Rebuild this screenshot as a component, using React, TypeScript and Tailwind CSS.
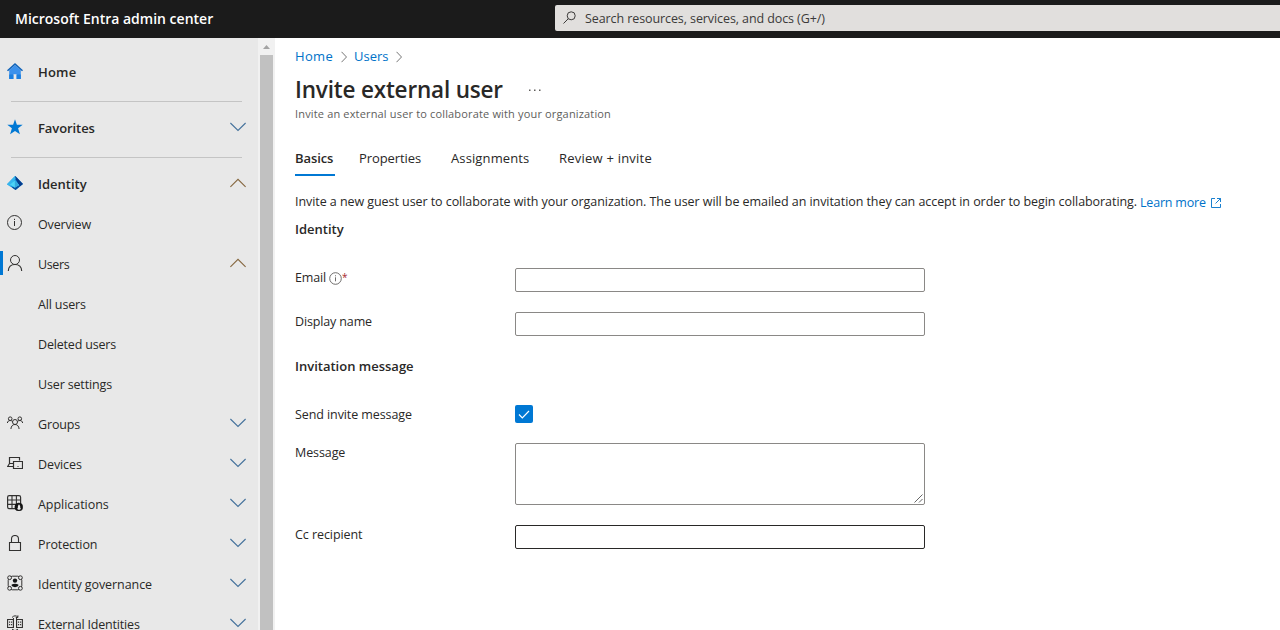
import type { ReactNode } from "react";

const Chevron = ({ up = false }: { up?: boolean }) => (
  <svg width="16" height="10" viewBox="0 0 16 10" fill="none" className="mb-0.5 shrink-0">
    <path d={up ? "M.4 8.8 8 1.3l7.6 7.5" : "M.4 1 8 8.5 15.6 1"} stroke={up ? "#86673f" : "#45729c"} strokeWidth="1.1" />
  </svg>
);

const Icon = ({ children }: { children: ReactNode }) => (
  <svg width="16" height="16" viewBox="0 0 16 16" fill="none" stroke="#323130" strokeWidth="1" className="mb-0.5 shrink-0">
    {children}
  </svg>
);

const HomeIcon = () => (
  <Icon>
    <g stroke="none">
      <path d="M2.2 7.2 8 2l5.8 5.2V16H9.6v-4.8H6.4V16H2.2z" fill="#3b91ec" />
      <path d="M2.2 11.5h4.2V16H2.2zM9.6 11.5h4.2V16H9.6z" fill="#1b7fe0" />
      <path d="M8 0 0 7.2l1 1.1 7-6.2 7 6.2 1-1.1z" fill="#0f62b8" />
    </g>
  </Icon>
);
const StarIcon = () => (
  <Icon><path stroke="none" fill="#0078d4" d="m8 .2 1.9 5.5 5.8.1-4.6 3.5 1.8 6L8 11.9 3.1 15.3l1.8-6L.3 5.8l5.8-.1z" /></Icon>
);
const IdentityIcon = () => (
  <Icon>
    <g stroke="none">
      <path d="M8.3 1 16 9.1l-7.4 6L0 9.2z" fill="#1490df" />
      <path d="M8.3 1 16 9.1l-3.2 2.4L8 3.3z" fill="#063c8c" />
      <path d="M12.8 11.5 8.6 15 5 12.5l3.5-4z" fill="#084e9d" />
      <path d="M7.8 1 0 9.2l3.2 2.3 5.4-8z" fill="#36b6ee" />
      <path d="m7.8 5.3 4.3 4.7-4.3 2.8L3 9.8z" fill="#4bd4f7" />
      <path d="m7.8 5.3 4.3 4.7-4.3 2.8z" fill="#35a9df" />
    </g>
  </Icon>
);
const OverviewIcon = () => (
  <Icon><circle cx="7.5" cy="7.5" r="7" /><path d="M7.5 6v5M7.5 3.8V5" /></Icon>
);
const UserIcon = () => (
  <Icon><circle cx="8" cy="5" r="4.5" /><path d="M1.3 16c.2-4 2.8-6.5 6.7-6.5s6.5 2.5 6.7 6.5" strokeWidth="1.1" /></Icon>
);
const GroupsIcon = () => (
  <Icon>
    <circle cx="8" cy="7" r="2.5" />
    <path d="M3.9 14c.2-2.9 1.8-4.5 4.1-4.5s3.9 1.6 4.1 4.5" />
    <circle cx="3.2" cy="3.7" r="1.8" /><circle cx="12.8" cy="3.7" r="1.8" />
    <path d="M.4 8c.1-1.6 1.2-2.5 2.8-2.5 1 0 1.7.4 2.2 1M15.6 8c-.1-1.6-1.2-2.5-2.8-2.5-1 0-1.7.4-2.2 1" />
  </Icon>
);
const DevicesIcon = () => (
  <Icon>
    <path d="M2.5 8.5v-6h10v3M2.5 8.5.7 11.5h5.8M2.5 8.5h4" strokeWidth="1.2" />
    <path d="M6.5 6.5h9v7h-9zM10.5 11.5h1" strokeWidth="1.2" />
  </Icon>
);
const AppsIcon = () => (
  <Icon>
    <rect x=".6" y=".6" width="13" height="13" rx="1.6" strokeWidth="1.2" />
    <path d="M5 .6v13M9.4.6v13M.6 5h13M.6 9.4h13" strokeWidth="1.1" />
    <circle cx="11.8" cy="12" r="4" fill="#151515" stroke="#151515" strokeWidth=".5" />
    <path d="M12 9.2 13.2 11v1.5l.7 1.5-1.9.9-1.8-.9.7-1.5V11z" fill="#eee" stroke="none" />
  </Icon>
);
const LockIcon = () => (
  <Icon><path d="M2.5 7.5h11v8h-11zM4.5 7.5V4a3.5 3.5 0 0 1 7 0v3.5" strokeWidth="1.1" /></Icon>
);
const GovernanceIcon = () => (
  <Icon>
    <rect x="1.2" y="1.2" width="13.6" height="13.6" rx="4" />
    <circle cx="2.6" cy="2.7" r="1.9" fill="#e8e8e8" /><circle cx="13.4" cy="2.7" r="1.9" fill="#e8e8e8" />
    <circle cx="2.6" cy="13.3" r="1.9" fill="#e8e8e8" /><circle cx="13.4" cy="13.3" r="1.9" fill="#e8e8e8" />
    <circle cx="8" cy="5.6" r="2.2" fill="#151515" stroke="none" />
    <path d="M4.7 9.5Q8 8 11.3 9.5v1.6Q8 13.4 4.7 11.1z" fill="#151515" stroke="none" />
  </Icon>
);
const ExternalIcon = () => (
  <Icon>
    <path d="M.6 4.5h5.8v8H.6zM9.6 4.5h5.8v8H9.6z" strokeWidth="1.1" />
    <path d="M2.6 6.5v4M4.6 6.5v4M11.6 6.5v4M13.6 6.5v4" strokeDasharray="1.3 1.1" strokeWidth="1.1" />
    <path d="M5 2.5Q8-.8 11 2.3M10.9.4v2.1H8.8M5 14.2q3 3 6 0M6.5 3v10M9.5 3v10" />
  </Icon>
);

type NavRow = { label: string; cls: string; icon?: ReactNode; chev?: "up" | "down"; active?: boolean };

const nav: NavRow[] = [
  { label: "Identity", cls: "font-semibold text-[13px]", icon: <IdentityIcon />, chev: "up" },
  { label: "Overview", cls: "pt-0.5 tracking-[-0.15px]", icon: <OverviewIcon /> },
  { label: "Users", cls: "pt-0.5 tracking-[-0.35px]", icon: <UserIcon />, chev: "up", active: true },
  { label: "All users", cls: "pt-0.5 tracking-[-0.15px]" },
  { label: "Deleted users", cls: "pt-0.5 tracking-[-0.18px]" },
  { label: "User settings", cls: "pt-0.5 tracking-[-0.15px]" },
  { label: "Groups", cls: "pt-0.5 tracking-[-0.15px]", icon: <GroupsIcon />, chev: "down" },
  { label: "Devices", cls: "pt-0.5 tracking-[-0.1px]", icon: <DevicesIcon />, chev: "down" },
  { label: "Applications", cls: "pt-0.5 tracking-[-0.04px]", icon: <AppsIcon />, chev: "down" },
  { label: "Protection", cls: "pt-0.5 tracking-[-0.1px]", icon: <LockIcon />, chev: "down" },
  { label: "Identity governance", cls: "pt-0.5 tracking-[-0.07px]", icon: <GovernanceIcon />, chev: "down" },
  { label: "External Identities", cls: "pt-0.5 tracking-[-0.18px]", icon: <ExternalIcon />, chev: "down" },
];

const Row = ({ label, cls, icon, chev, active }: NavRow) => (
  <div className="flex h-10 shrink-0 items-center pr-3">
    <div className={active ? "mb-0.5 h-6 w-[3px] bg-[#0078d4]" : "w-[3px]"} />
    <div className="ml-1 w-[31px]">{icon}</div>
    <span className={`flex-1 ${cls}`}>{label}</span>
    {chev && <Chevron up={chev === "up"} />}
  </div>
);

const Divider = () => (
  <div className="h-4 shrink-0 pt-[9px] pr-4 pl-[11px]"><div className="h-px bg-[#c4c4c4]" /></div>
);

const Crumb = () => (
  <svg width="6" height="12" viewBox="0 0 6 12" fill="none" stroke="#767676" className="mt-0.5"><path d="m.5.8 5 5.2-5 5.2" /></svg>
);

const field = "block w-[410px] rounded-[2px] border bg-white outline-none";

export default function App() {
  return (
    <div className="flex h-[630px] w-[1280px] flex-col overflow-hidden bg-white font-['Open_Sans','Noto_Sans',sans-serif] text-[12.5px] leading-[18px] text-[#292827]">
      <header className="flex h-[38px] shrink-0 bg-[#1b1b1b] pl-[15px]">
        <div className="w-[540px] pt-[9px] text-[14px] leading-5 font-semibold text-white">Microsoft Entra admin center</div>
        <div className="mt-[5px] flex h-[26px] flex-1 items-center rounded-l-[2px] bg-[#e1dfdd] pl-2 text-[#3b3a39]">
          <svg width="13" height="13" viewBox="0 0 13 13" fill="none" stroke="#3b3a39" className="mb-px"><circle cx="8.2" cy="4.8" r="4" /><path d="M5.3 7.7.5 12.5" /></svg>
          <span className="ml-[9px] pt-0.5 tracking-[-0.09px]">Search resources, services, and docs (G+/)</span>
        </div>
      </header>
      <div className="flex min-h-0 flex-1">
        <nav className="flex w-[258px] shrink-0 flex-col overflow-hidden bg-[#e8e8e8] pt-[14px]">
          <Row label="Home" cls="font-semibold text-[13px] tracking-[0.2px]" icon={<HomeIcon />} />
          <Divider />
          <Row label="Favorites" cls="font-semibold text-[13px] tracking-[-0.08px]" icon={<StarIcon />} chev="down" />
          <Divider />
          {nav.map((n) => <Row key={n.label} {...n} />)}
        </nav>
        <div className="flex w-[17px] shrink-0 flex-col items-center bg-[#f1f1f1]">
          <div className="flex h-[17px] items-center"><svg width="7" height="4" viewBox="0 0 7 4"><path d="M0 4 3.5 0 7 4z" fill="#a3a3a3" /></svg></div>
          <div className="w-[13px] flex-1 bg-[#c1c1c1]" />
        </div>
        <main className="flex min-w-0 flex-1 flex-col pl-5">
          <div className="mt-[9px] flex items-center text-[13px] text-[#0072c9]">
            <span className="w-[46px] tracking-[0.35px]">Home</span><Crumb />
            <span className="ml-[7px] w-[42px]">Users</span><Crumb />
          </div>
          <div className="mt-[9px] flex h-8 items-center">
            <h1 className="w-[234px] text-[22.5px] leading-8 font-semibold tracking-[-0.18px]">Invite external user</h1>
            <svg width="12" height="2" viewBox="0 0 12 2" fill="#605e5c"><path d="M0 .5h1.5V2H0zM5 .5h1.5V2H5zM10 .5h1.5V2H10z" /></svg>
          </div>
          <p className="h-4 text-[11px] leading-4 tracking-[0.16px] text-[#605e5c]">Invite an external user to collaborate with your organization</p>
          <div className="mt-[27px] flex h-[27px] text-[13px]">
            <div className="mr-6 w-10 border-b-2 border-[#0078d4] font-semibold tracking-[-0.1px]">Basics</div>
            <div className="w-[92px] tracking-[-0.08px]">Properties</div>
            <div className="w-[108px] tracking-[0.12px]">Assignments</div>
            <div className="tracking-[0.22px]">Review + invite</div>
          </div>
          <div className="mt-[17px] flex h-[18px] whitespace-nowrap">
            <span className="w-[845px] tracking-[-0.063px]">Invite a new guest user to collaborate with your organization. The user will be emailed an invitation they can accept in order to begin collaborating.</span>
            <a className="flex items-center pt-0.5 text-[#0072c9]"><span className="w-[71px] tracking-[-0.2px]">Learn more</span>
              <svg width="10" height="10" viewBox="0 0 10 10" fill="none" stroke="currentColor" strokeWidth=".9"><path d="M4 .5H.5v9h9V6M6 .5h3.5V4M9.5.5 4.5 5.5" /></svg>
            </a>
          </div>
          <h2 className="mt-[9px] text-[13px] font-semibold">Identity</h2>
          <div className="mt-[30px] flex h-6">
            <div className="mt-px flex h-[18px] w-[220px] items-center"><span className="w-[34px] tracking-[-0.15px]">Email</span>
              <svg width="13" height="13" viewBox="0 0 13 13" fill="none" stroke="#605e5c" strokeWidth=".9"><circle cx="6.5" cy="6.5" r="5.8" /><path d="M6.5 5.3v4M6.5 3.3v1" /></svg>
              <span className="pb-0.5 text-[10px] text-[#a4262c]">*</span>
            </div>
            <input className={`${field} h-6 border-[#8a8886]`} />
          </div>
          <div className="mt-5 flex h-6">
            <label className="w-[220px] pt-px tracking-[-0.14px]">Display name</label>
            <input className={`${field} h-6 border-[#8a8886]`} />
          </div>
          <h2 className="mt-[21px] text-[13px] font-semibold">Invitation message</h2>
          <div className="mt-[30px] flex h-[18px]">
            <label className="w-[220px] pt-px tracking-[-0.09px]">Send invite message</label>
            <span className="flex size-[18px] items-center justify-center rounded-[2px] bg-[#0078d4]">
              <svg width="12" height="9" viewBox="0 0 12 9" fill="none" stroke="white" strokeWidth="1.2"><path d="m1 4.5 3.3 3.3L11 1" /></svg>
            </span>
          </div>
          <div className="mt-5 flex h-[62px]">
            <label className="w-[220px] pt-px tracking-[-0.09px]">Message</label>
            <div className={`${field} flex items-end justify-end border-[#8a8886]`}>
              <svg width="10" height="10" viewBox="0 0 10 10" stroke="#555" strokeWidth=".9"><path d="M.5 8.5l8-8M5 8.5 8.5 5" /></svg>
            </div>
          </div>
          <div className="mt-5 flex h-6">
            <label className="w-[220px] pt-px tracking-[-0.07px]">Cc recipient</label>
            <input className={`${field} h-6 border-[#292827]`} />
          </div>
        </main>
      </div>
    </div>
  );
}
